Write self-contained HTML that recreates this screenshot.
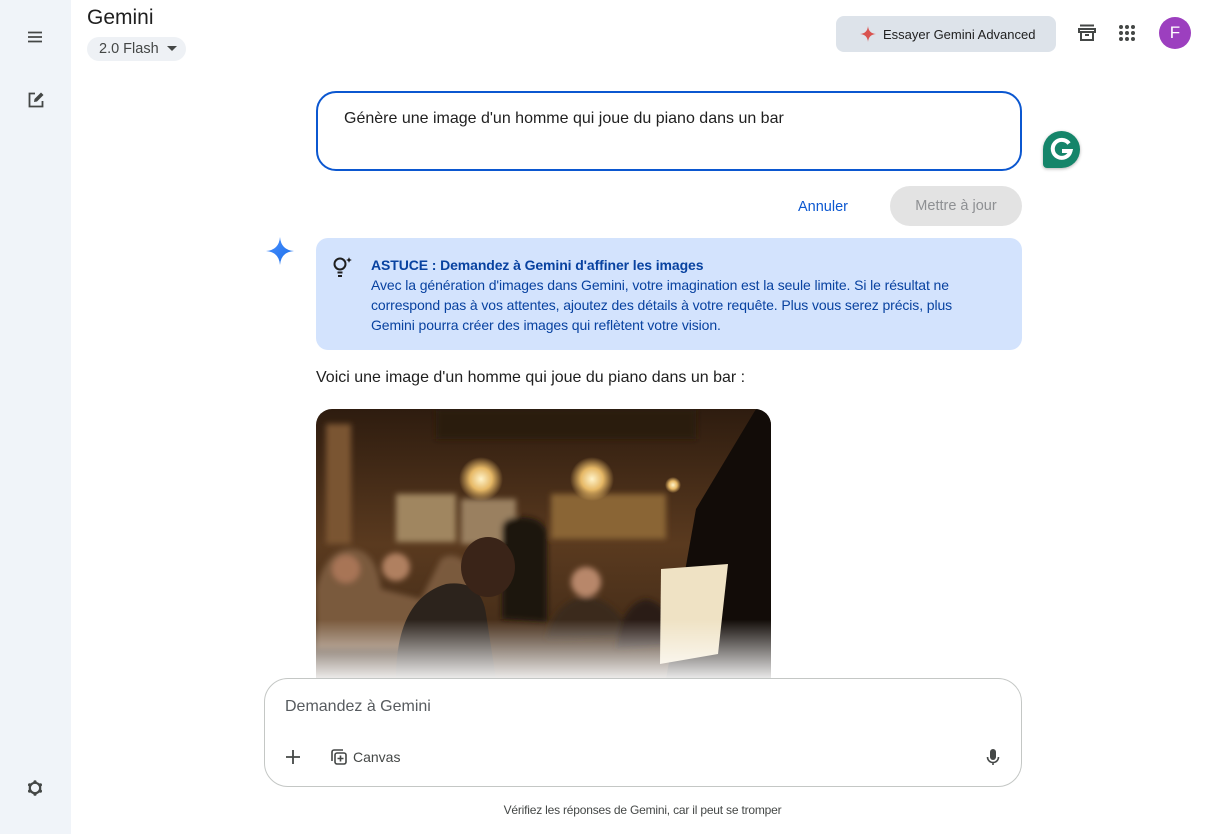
<!DOCTYPE html>
<html><head><meta charset="utf-8"><style>
*{box-sizing:border-box;margin:0;padding:0}
body{width:1215px;height:834px;overflow:hidden;background:#fff;font-family:"Liberation Sans",Arial,sans-serif;color:#1f1f1f;position:relative}
.side{position:absolute;left:0;top:0;width:71px;height:834px;background:#f0f4f9}
.abs{position:absolute}
</style></head><body>
<div class="side"></div>
<svg class="abs" style="left:27px;top:30px" width="16" height="14" viewBox="0 0 16 14"><path d="M1 2.5h14M1 7h14M1 11.5h14" stroke="#444746" stroke-width="1.8"/></svg>
<svg class="abs" style="left:26px;top:90px" width="20" height="20" viewBox="0 0 20 20"><path d="M9 3.5H3.5v13h13V11" fill="none" stroke="#444746" stroke-width="1.8"/><path d="M8 12l.5-3L15 2.5l2.5 2.5L11 11.5z" fill="#444746"/></svg>
<svg class="abs" style="left:25px;top:778px" width="20" height="20" viewBox="0 0 20 20"><circle cx="10" cy="10" r="5.2" fill="none" stroke="#444746" stroke-width="2.2"/><g fill="#444746"><circle cx="10" cy="3.8" r="1.6"/><circle cx="10" cy="16.2" r="1.6"/><circle cx="4.6" cy="6.9" r="1.6"/><circle cx="15.4" cy="6.9" r="1.6"/><circle cx="4.6" cy="13.1" r="1.6"/><circle cx="15.4" cy="13.1" r="1.6"/></g></svg>

<div class="abs" style="left:87px;top:6px;font-size:21px;color:#1f1f1f">Gemini</div>
<div class="abs" style="left:87px;top:37px;width:99px;height:24px;border-radius:12px;background:#eef1f5;font-size:14.5px;color:#444746;padding:4px 0 0 12px">2.0 Flash <span style="display:inline-block;width:0;height:0;border-left:5px solid transparent;border-right:5px solid transparent;border-top:5px solid #444746;margin-left:4px;vertical-align:2px"></span></div>

<div class="abs" style="left:836px;top:16px;width:220px;height:36px;border-radius:8px;background:#dde3ea;font-size:13px;color:#1f1f1f;padding:11px 0 0 47px">Essayer Gemini Advanced</div>
<svg class="abs" style="left:860px;top:26px" width="16" height="16" viewBox="0 0 16 16"><path d="M8 0Q8.6 7.4 16 8Q8.6 8.6 8 16Q7.4 8.6 0 8Q7.4 7.4 8 0z" fill="#d9534f"/></svg>
<svg class="abs" style="left:1077px;top:23px" width="20" height="20" viewBox="0 0 20 20"><path d="M3 2.5h14" stroke="#444746" stroke-width="2"/><path d="M2 6h16v3H2zM4 9v8h12V9" fill="none" stroke="#444746" stroke-width="2"/><path d="M8 12h4" stroke="#444746" stroke-width="2"/></svg>
<svg class="abs" style="left:1118px;top:24px" width="18" height="18" viewBox="0 0 18 18" fill="#444746"><circle cx="3" cy="3" r="2"/><circle cx="9" cy="3" r="2"/><circle cx="15" cy="3" r="2"/><circle cx="3" cy="9" r="2"/><circle cx="9" cy="9" r="2"/><circle cx="15" cy="9" r="2"/><circle cx="3" cy="15" r="2"/><circle cx="9" cy="15" r="2"/><circle cx="15" cy="15" r="2"/></svg>
<div class="abs" style="left:1159px;top:17px;width:32px;height:32px;border-radius:50%;background:#9c3fbf;color:#fff;font-size:17px;text-align:center;line-height:32px">F</div>

<div class="abs" style="left:316px;top:91px;width:706px;height:80px;border:2px solid #0b57d0;border-radius:20px;padding:17px 0 0 26px;font-size:16px;color:#1f1f1f">Génère une image d'un homme qui joue du piano dans un bar</div>
<div class="abs" style="left:1043px;top:131px;width:37px;height:37px;border-radius:50% 50% 50% 4px;background:#15856a;box-shadow:0 1px 3px rgba(0,0,0,.3)"></div>
<svg class="abs" style="left:1043px;top:131px" width="37" height="37" viewBox="0 0 37 37"><path d="M26 12.5A9 9 0 1 0 27.5 20H19" fill="none" stroke="#fff" stroke-width="4"/></svg>

<div class="abs" style="left:798px;top:199px;font-size:14.5px;color:#0b57d0">Annuler</div>
<div class="abs" style="left:890px;top:186px;width:132px;height:40px;border-radius:20px;background:#e3e3e3;color:#8e9093;font-size:14.5px;text-align:center;line-height:40px">Mettre à jour</div>

<svg class="abs" style="left:266px;top:237px" width="28" height="28" viewBox="0 0 28 28"><defs><linearGradient id="g" x1="0" y1="0" x2="1" y2="1"><stop offset="0" stop-color="#4b90ff"/><stop offset="1" stop-color="#1a6ee8"/></linearGradient></defs><path d="M14 0Q15 13 28 14Q15 15 14 28Q13 15 0 14Q13 13 14 0z" fill="url(#g)"/></svg>

<div class="abs" style="left:316px;top:238px;width:706px;height:112px;border-radius:12px;background:#d3e3fd"></div>
<svg class="abs" style="left:331px;top:255px" width="24" height="24" viewBox="0 0 24 24"><circle cx="9" cy="9" r="5.5" fill="none" stroke="#1f1f1f" stroke-width="2"/><path d="M6.5 17.5h5M7 21h4" stroke="#1f1f1f" stroke-width="2"/><path d="M18 2q.4 2.6 3 3-2.6.4-3 3-.4-2.6-3-3 2.6-.4 3-3z" fill="#1f1f1f"/></svg>
<div class="abs" style="left:371px;top:255px;width:605px;font-size:14px;line-height:20px;color:#0842a0;letter-spacing:-0.1px"><div style="font-weight:bold">ASTUCE : Demandez à Gemini d'affiner les images</div>Avec la génération d'images dans Gemini, votre imagination est la seule limite. Si le résultat ne correspond pas à vos attentes, ajoutez des détails à votre requête. Plus vous serez précis, plus Gemini pourra créer des images qui reflètent votre vision.</div>

<div class="abs" style="left:316px;top:369px;font-size:16px;color:#1f1f1f">Voici une image d'un homme qui joue du piano dans un bar :</div>

<svg class="abs" style="left:316px;top:409px" width="455" height="270" viewBox="0 0 455 270">
<defs>
<clipPath id="c"><rect width="455" height="290" rx="16"/></clipPath>
<radialGradient id="l"><stop offset="0" stop-color="#fff3c9"/><stop offset=".5" stop-color="#e6b866"/><stop offset="1" stop-color="#e6b866" stop-opacity="0"/></radialGradient>
<linearGradient id="f" x1="0" y1="0" x2="0" y2="1"><stop offset=".78" stop-color="#fff" stop-opacity="0"/><stop offset="1" stop-color="#fff" stop-opacity=".92"/></linearGradient>
<linearGradient id="bg" x1="0" y1="0" x2="0" y2="1"><stop offset="0" stop-color="#2e1c0f"/><stop offset=".5" stop-color="#5a3a1f"/><stop offset="1" stop-color="#3a2615"/></linearGradient>
<filter id="b"><feGaussianBlur stdDeviation="3"/></filter>
</defs>
<g clip-path="url(#c)">
<rect width="455" height="270" fill="url(#bg)"/>
<g filter="url(#b)">
<rect x="80" y="85" width="60" height="48" fill="#a08660"/>
<rect x="145" y="90" width="55" height="45" fill="#9a8060"/>
<rect x="10" y="15" width="25" height="120" fill="#7a5530"/>
<rect x="235" y="85" width="115" height="45" fill="#8a6535"/>
<rect x="120" y="0" width="260" height="30" fill="#2a1a0e"/>
<path d="M186 210V120q0-12 20-12t25 15v90z" fill="#1e140c"/>
<path d="M0 180q10-40 35-40t30 40l40 10 20-40q15-10 30 10v80H0z" fill="#7a5a3c"/>
<circle cx="30" cy="160" r="14" fill="#a87556"/>
<circle cx="80" cy="158" r="14" fill="#b08060"/>
<circle cx="270" cy="173" r="15" fill="#b8876a"/>
<path d="M230 230q10-40 40-42 30 2 45 40z" fill="#3a2a1a"/>
<path d="M300 240q5-45 30-50 25 5 35 45z" fill="#2a1e14"/>
</g>
<circle cx="165" cy="70" r="22" fill="url(#l)"/>
<circle cx="276" cy="70" r="22" fill="url(#l)"/>
<circle cx="357" cy="76" r="8" fill="url(#l)"/>
<path d="M80 270q0-80 50-95 35-5 40 30l10 65z" fill="#2c231c"/>
<ellipse cx="172" cy="158" rx="27" ry="30" fill="#3a2418"/>
<path d="M350 270L380 100 440 0h15v270z" fill="#120c08"/>
<path d="M345 160l67-5-10 90-58 10z" fill="#efe2c4"/>
<rect width="455" height="270" fill="url(#f)"/>
</g>
</svg>

<div class="abs" style="left:264px;top:678px;width:758px;height:109px;border:1px solid #c4c7c5;border-radius:24px;background:#fff"></div>
<div class="abs" style="left:285px;top:698px;font-size:16px;color:#575b5f">Demandez à Gemini</div>
<svg class="abs" style="left:285px;top:749px" width="16" height="16" viewBox="0 0 16 16"><path d="M8 1v14M1 8h14" stroke="#444746" stroke-width="1.8"/></svg>
<svg class="abs" style="left:330px;top:748px" width="18" height="18" viewBox="0 0 18 18"><path d="M2 13V4a2 2 0 012-2h9" fill="none" stroke="#444746" stroke-width="1.6"/><rect x="5" y="5" width="11" height="11" rx="2" fill="none" stroke="#444746" stroke-width="1.6"/><path d="M10.5 7.5v6M7.5 10.5h6" stroke="#444746" stroke-width="1.6"/></svg>
<div class="abs" style="left:353px;top:749px;font-size:14px;color:#444746">Canvas</div>
<svg class="abs" style="left:985px;top:748px" width="16" height="18" viewBox="0 0 16 18"><rect x="5" y="1" width="6" height="11" rx="3" fill="#444746"/><path d="M2.5 9a5.5 5.5 0 0011 0M8 14.5V17" fill="none" stroke="#444746" stroke-width="1.6"/></svg>
<div class="abs" style="left:0;width:1285px;top:803px;text-align:center;font-size:12px;color:#444746;letter-spacing:-0.2px">Vérifiez les réponses de Gemini, car il peut se tromper</div>
</body></html>
